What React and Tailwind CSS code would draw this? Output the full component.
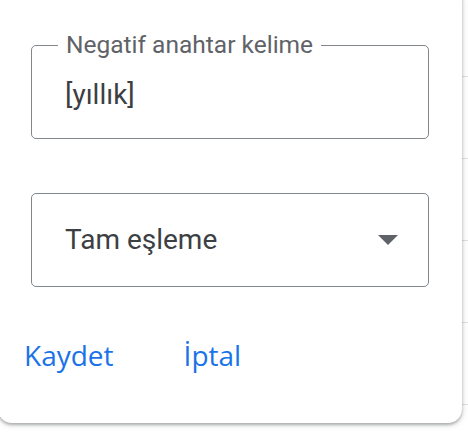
import React from "react";

const rows = [0, 1, 2, 3, 4, 5];

function Field({ label, children, className = "" }) {
  return (
    <div
      className={
        "relative flex h-[94px] items-center rounded-[5px] border border-[#80868b] pl-[33px] pr-[30px] " +
        className
      }
    >
      {label && (
        <span className="absolute left-[26px] top-[-14px] bg-white px-[8px] text-[24.5px] leading-[26px] text-[#5f6368]">
          {label}
        </span>
      )}
      {children}
    </div>
  );
}

export default function App() {
  return (
    <div
      className="relative h-[432px] w-[468px] overflow-hidden bg-white"
      style={{ fontFamily: "Roboto, 'Noto Sans', sans-serif" }}
    >
      {/* table behind the popup */}
      <div className="flex flex-col pt-[76px]">
        {rows.map((r) => (
          <div key={r} className="h-[82px] border-t border-[#e0e0e0]" />
        ))}
      </div>

      {/* popup card */}
      <div className="absolute left-[-2px] top-[-14px] flex h-[437px] w-[464px] flex-col rounded-[14px] bg-white pl-[33px] pr-[33px] pt-[59px] shadow-[0_2px_3px_rgba(60,64,67,0.35),0_1px_6px_1px_rgba(60,64,67,0.15)]">
        <Field label="Negatif anahtar kelime" className="pt-[6px]">
          <span className="text-[28px] text-[#3c4043]">[yıllık]</span>
        </Field>

        <div className="mt-[54px]">
          <Field>
            <span className="flex-1 text-[28px] text-[#3c4043]">Tam eşleme</span>
            <svg width="20" height="10" viewBox="0 0 20 10">
              <path d="M0 0h20L10 10z" fill="#5f6368" />
            </svg>
          </Field>
        </div>

        <div
          className="ml-[-7px] mt-[47px] flex gap-[70px] text-[28px] font-medium text-[#1a73e8]"
          style={{ fontFamily: "'Open Sans', Roboto, sans-serif" }}
        >
          <button>Kaydet</button>
          <button>İptal</button>
        </div>
      </div>
    </div>
  );
}
